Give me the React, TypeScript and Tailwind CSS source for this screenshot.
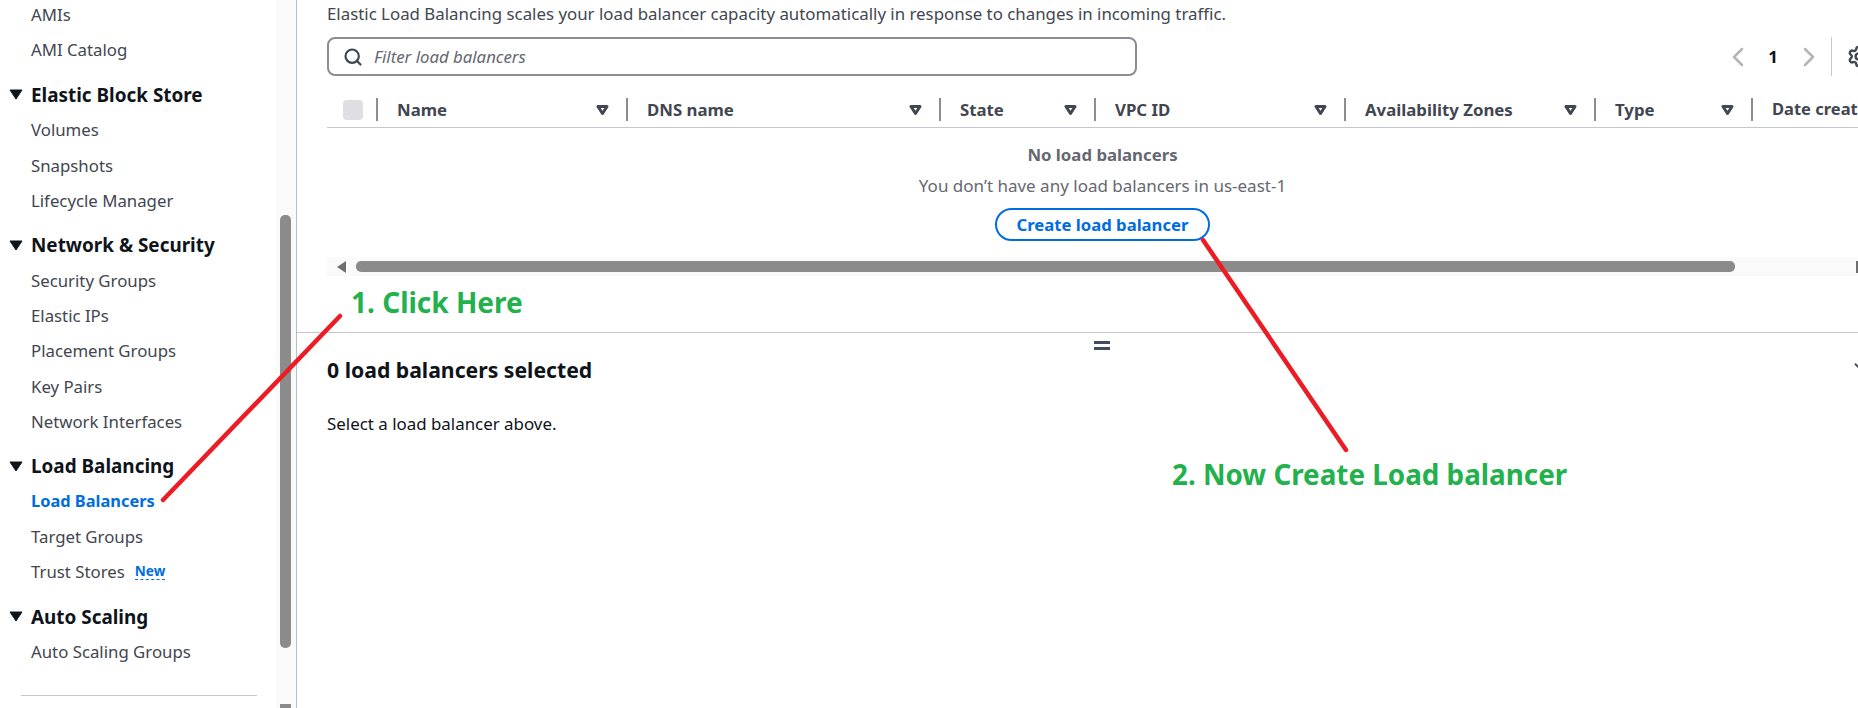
import React from "react";
import { Search, ChevronLeft, ChevronRight, ChevronDown, Settings } from "lucide-react";

const font = "font-['Noto_Sans','Open_Sans',sans-serif]";

const navGroups = [
  { title: "", items: ["AMIs", "AMI Catalog"] },
  { title: "Elastic Block Store", items: ["Volumes", "Snapshots", "Lifecycle Manager"] },
  {
    title: "Network & Security",
    items: ["Security Groups", "Elastic IPs", "Placement Groups", "Key Pairs", "Network Interfaces"],
  },
  { title: "Load Balancing", items: ["Load Balancers", "Target Groups", "Trust Stores"] },
  { title: "Auto Scaling", items: ["Auto Scaling Groups"] },
];

const columns = [
  { name: "Name", width: "w-[250px]" },
  { name: "DNS name", width: "w-[313px]" },
  { name: "State", width: "w-[155px]" },
  { name: "VPC ID", width: "w-[250px]" },
  { name: "Availability Zones", width: "w-[250px]" },
  { name: "Type", width: "w-[157px]" },
];

const SortIcon = () => (
  <svg width="13" height="12" viewBox="0 0 13 12" className="shrink-0">
    <path d="M2 2.5h9L6.5 9.5z" fill="none" stroke="#424650" strokeWidth="3" strokeLinejoin="round" />
  </svg>
);

const Sidebar = () => (
  <aside className="relative w-[297px] shrink-0 h-full border-r border-[#b6bec9] overflow-hidden">
    <div className="flex flex-col pr-[40px]">
      {navGroups.map((group) => (
        <div key={group.items[0]} className={group.title ? "mt-[10px]" : "-mt-[3px]"}>
          {group.title && (
            <div className="flex items-center h-[35px] pl-[9px]">
              <svg width="14" height="11" viewBox="0 0 14 11" className="mr-[8px] shrink-0">
                <path d="M1 1h12L7 10z" fill="#0f141a" stroke="#0f141a" strokeLinejoin="round" />
              </svg>
              <span className="text-[18.9px] font-bold text-[#0f141a]">{group.title}</span>
            </div>
          )}
          {group.items.map((item) => (
            <div key={item} className="flex items-center h-[35.2px] pl-[31px] text-[16.8px]">
              <span className={item === "Load Balancers" ? "text-[16.4px] font-bold text-[#006ce0]" : "text-[#424650]"}>{item}</span>
              {item === "Trust Stores" && (
                <span className="ml-[10px] text-[13.6px] font-bold leading-[16px] text-[#006ce0] border-b border-dashed border-[#006ce0]">
                  New
                </span>
              )}
            </div>
          ))}
        </div>
      ))}
      <div className="ml-[21px] mt-[25px] w-[236px] border-t border-[#c6c6cd]" />
    </div>
    {/* scrollbar */}
    <div className="absolute right-0 top-0 bottom-0 w-[20px] bg-[#fafafa]">
      <div className="absolute left-[4px] top-[215px] h-[433px] w-[11px] rounded-[5px] bg-[#8b8b8b]" />
      <div className="absolute left-[4px] top-[704px] h-[4px] w-[11px] bg-[#8b8b8b]" />
    </div>
  </aside>
);

const Table = () => (
  <div className="flex flex-col">
    <div className="ml-[30px] flex h-[52px] items-end border-b border-[#c6c6cd] pb-[6px] overflow-hidden">
      <div className="flex w-[49px] shrink-0 items-center pl-[16px] pb-[1px]">
        <div className="h-[20px] w-[20px] rounded-[4px] bg-[#dedee3]" />
      </div>
      {columns.map((col) => (
        <div key={col.name} className={`${col.width} flex h-[23px] shrink-0 items-center border-l-2 border-[#8c8c94] pl-[19px] pr-[17px]`}>
          <span className="flex-1 text-[16.8px] font-bold text-[#424650]">{col.name}</span>
          <SortIcon />
        </div>
      ))}
      <div className="flex h-[23px] shrink-0 items-center whitespace-nowrap border-l-2 border-[#8c8c94] pl-[19px] text-[16.5px] font-bold text-[#424650]">
        Date created
      </div>
    </div>
    <div className="flex flex-col items-center pl-[50px]">
      <div className="mt-[15px] text-[16.8px] font-bold leading-[24px] text-[#656871]">No load balancers</div>
      <div className="mt-[7px] text-[17px] leading-[24px] text-[#656871]">You don&rsquo;t have any load balancers in us-east-1</div>
      <button className="mt-[10px] h-[33px] w-[215px] rounded-full border-2 border-[#006ce0] text-[16.7px] font-bold text-[#006ce0]">
        Create load balancer
      </button>
    </div>
    {/* horizontal scrollbar */}
    <div className="ml-[30px] mt-[16px] flex h-[19px] items-center bg-[#fafafa]">
      <svg width="10" height="12" viewBox="0 0 10 12" className="ml-[10px] shrink-0">
        <path d="M9 0v12L0 6z" fill="#6e6e6e" />
      </svg>
      <div className="ml-[9px] h-[11px] w-[1379px] rounded-[5px] bg-[#8b8b8b]" />
      <div className="ml-auto h-[12px] w-[2px] bg-[#6e6e6e]" />
    </div>
  </div>
);

const App = () => (
  <div className={`relative flex h-[708px] w-[1858px] overflow-hidden bg-white ${font}`}>
    <Sidebar />
    <main className="flex min-w-0 flex-1 flex-col">
      <p className="ml-[30px] mt-[2px] h-[24px] text-[16.85px] leading-[24px] text-[#424650]">
        Elastic Load Balancing scales your load balancer capacity automatically in response to changes in incoming traffic.
      </p>
      <div className="ml-[30px] mt-[11px] flex h-[39px] items-center">
        <div className="flex h-[39px] w-[810px] items-center rounded-[8px] border-2 border-[#8c8c94] pl-[14px]">
          <Search size={20} strokeWidth={2.6} className="text-[#424650]" />
          <span className="ml-[11px] text-[16.8px] italic text-[#656871]">Filter load balancers</span>
        </div>
        <div className="ml-auto flex h-[39px] items-center">
          <ChevronLeft size={32} strokeWidth={1.9} className="text-[#b4b4bb]" />
          <span className="ml-[13px] w-[12px] text-center text-[16.8px] font-bold text-[#0f141a]">1</span>
          <ChevronRight size={32} strokeWidth={1.9} className="ml-[14px] text-[#b4b4bb]" />
          <div className="ml-[6px] h-[39px] w-[1px] bg-[#c6c6cd]" />
          <Settings size={23} strokeWidth={2.5} className="ml-[15px] mr-[-12px] shrink-0 text-[#424650]" />
        </div>
      </div>
      <Table />
      <div className="mt-[56px] border-t border-[#c6c6cd]" />
      <div className="relative">
        <div className="absolute left-[797px] top-[8px] h-[9px] w-[16px] border-y-[3px] border-[#414d5c]" />
        <ChevronDown size={22} className="absolute right-[-14px] top-[23px] text-[#424650]" />
      </div>
      <h2 className="ml-[30px] mt-[22px] text-[21.2px] font-bold leading-[30px] text-[#0f141a]">0 load balancers selected</h2>
      <p className="ml-[30px] mt-[27px] text-[16.9px] leading-[24px] text-[#0f141a]">Select a load balancer above.</p>
    </main>

    {/* annotations drawn on top of the screenshot */}
    <svg className="pointer-events-none absolute inset-0" width="1858" height="708">
      <path d="M340 316 L163 500" stroke="#ed1c24" strokeWidth="4.5" strokeLinecap="round" />
      <path d="M1203 240 L1346 450" stroke="#ed1c24" strokeWidth="4.5" strokeLinecap="round" />
    </svg>
    <span className="absolute left-[351px] top-[283px] text-[28px] font-bold leading-[38px] text-[#22b14c]">1. Click Here</span>
    <span className="absolute left-[1172px] top-[455px] text-[27.8px] font-bold leading-[38px] text-[#22b14c]">2. Now Create Load balancer</span>
  </div>
);

export default App;
